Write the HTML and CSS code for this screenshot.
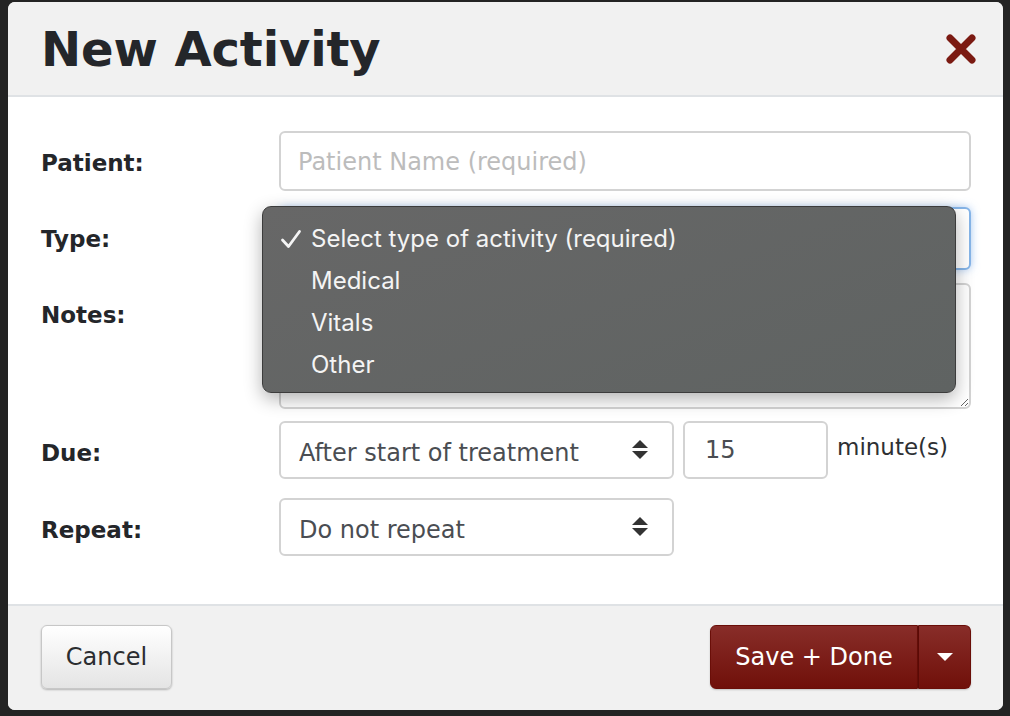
FILE: index.html
```html
<!DOCTYPE html>
<html lang="en">
<head>
	<meta charset="UTF-8">
	<title>New Activity</title>
	<link rel="stylesheet" href="styles.css">
</head>
<body>
	<div class="modal">
		<div class="modal-header">
			<h1>New Activity</h1>
			<button class="close-btn" aria-label="Close">
				<svg width="34" height="34" viewBox="0 0 34 34">
					<path d="M6 6 L28 28 M28 6 L6 28" stroke="#7b1a12" stroke-width="7" stroke-linecap="round"/>
				</svg>
			</button>
		</div>

		<div class="modal-body">
			<div class="form-row row-patient">
				<label class="form-label">Patient:</label>
				<input type="text" class="field" placeholder="Patient Name (required)">
			</div>

			<div class="form-row row-type">
				<label class="form-label">Type:</label>
				<!-- the open list below covers this select -->
				<div class="field select focused"></div>
			</div>

			<div class="form-row row-notes">
				<label class="form-label">Notes:</label>
				<textarea class="field notes"></textarea>
			</div>

			<div class="form-row row-due">
				<label class="form-label">Due:</label>
				<div class="due-group">
					<div class="field select half">
						<span class="select-text">After start of treatment</span>
						<svg class="arrows" width="16" height="20" viewBox="0 0 16 20"><path d="M0 8 L8 0 L16 8 Z M0 11 L16 11 L8 19 Z" fill="#333"/></svg>
					</div>
					<input type="text" class="field minutes" value="15">
					<span class="unit">minute(s)</span>
				</div>
			</div>

			<div class="form-row row-repeat">
				<label class="form-label">Repeat:</label>
				<div class="field select half">
					<span class="select-text">Do not repeat</span>
					<svg class="arrows" width="16" height="20" viewBox="0 0 16 20"><path d="M0 8 L8 0 L16 8 Z M0 11 L16 11 L8 19 Z" fill="#333"/></svg>
				</div>
			</div>
		</div>

		<div class="modal-footer">
			<button class="btn btn-cancel">Cancel</button>
			<div class="btn-group">
				<button class="btn btn-save">Save + Done</button>
				<button class="btn btn-save btn-caret">
					<svg width="16" height="9" viewBox="0 0 16 9"><path d="M0 0 L16 0 L8 8 Z" fill="#fff"/></svg>
				</button>
			</div>
		</div>

		<ul class="dropdown">
			<li class="selected">
				<svg class="check" width="22" height="20" viewBox="0 0 22 20"><path d="M2.5 11 L8.5 17.5 L19.5 2.5" fill="none" stroke="#f4f4f4" stroke-width="2.8" stroke-linecap="round" stroke-linejoin="round"/></svg>
				Select type of activity (required)
			</li>
			<li>Medical</li>
			<li>Vitals</li>
			<li>Other</li>
		</ul>
	</div>
</body>
</html>
```

FILE: styles.css
```css
body {
	margin: 0;
	background-color: #232323;
	font-family: 'DejaVu Sans', Verdana, sans-serif;
	color: #24262a;
	width: 1010px;
	height: 716px;
	overflow: hidden;
}

.modal {
	position: relative;
	margin: 2px 7px 0 8px;
	width: 995px;
	height: 708px;
	background-color: #fff;
	border-radius: 7px;
	overflow: hidden;
	display: flex;
	flex-direction: column;
}

.modal-header {
	box-sizing: border-box;
	height: 95px;
	flex-shrink: 0;
	background-color: #f1f1f1;
	border-bottom: 2px solid #dfe2e5;
	display: flex;
	align-items: center;
	justify-content: space-between;
	padding: 0 25px 0 33px;
}

.modal-header h1 {
	margin: 0;
	font-size: 48px;
	font-weight: bold;
	color: #24262a;
	letter-spacing: -0.1px;
}

.close-btn {
	background: none;
	border: none;
	padding: 0;
	width: 34px;
	height: 34px;
	cursor: pointer;
}

.modal-body {
	flex: 1;
	padding: 34px 32px 0 33px;
}

.form-row {
	display: grid;
	grid-template-columns: 238px 1fr;
	align-items: start;
}

.form-label {
	font-size: 23px;
	font-weight: bold;
	line-height: 56px;
	padding-top: 4px;
	color: #24262a;
}

.field {
	box-sizing: border-box;
	width: 100%;
	border: 2px solid #d3d3d3;
	border-radius: 6px;
	background-color: #fff;
	font-family: 'DejaVu Sans', Verdana, sans-serif;
	font-size: 24px;
	color: #4a4d52;
	padding: 0 17px;
	outline: none;
}

.field::placeholder {
	color: #bcbcbc;
}

.row-patient {
	margin-bottom: 16px;
}

.row-patient .field {
	height: 60px;
	padding-top: 2px;
}

.row-type {
	margin-bottom: 13px;
}

.select {
	display: flex;
	align-items: center;
	justify-content: space-between;
	height: 58px;
	padding-left: 18px;
	padding-right: 24px;
}

.select-text {
	padding-top: 5px;
}

.focused {
	height: 63px;
	border-color: #86b5e8;
	box-shadow: 0 0 8px rgba(102, 160, 233, 0.55);
}

.row-notes {
	margin-bottom: 12px;
}

.notes {
	height: 126px;
	resize: vertical;
}

.row-due {
	margin-bottom: 17px;
}

.due-group {
	display: flex;
	align-items: flex-start;
}

.half {
	width: 395px;
}

.minutes {
	width: 145px;
	height: 58px;
	margin-left: 9px;
	padding-left: 20px;
}

.unit {
	margin-left: 9px;
	font-size: 23px;
	line-height: 52px;
	color: #2e3033;
}

.arrows {
	display: block;
}

.modal-footer {
	box-sizing: border-box;
	height: 106px;
	flex-shrink: 0;
	background-color: #f1f1f1;
	border-top: 2px solid #dfe2e5;
	display: flex;
	justify-content: space-between;
	align-items: flex-start;
	padding: 19px 32px 0 33px;
}

.btn {
	height: 64px;
	font-family: 'DejaVu Sans', Verdana, sans-serif;
	font-size: 24px;
	border-radius: 6px;
	cursor: pointer;
}

.btn-cancel {
	width: 131px;
	color: #2b2d30;
	background: linear-gradient(#ffffff, #e4e4e4);
	border: 1px solid #c7c7c7;
	box-shadow: 0 1px 2px rgba(0, 0, 0, 0.25);
}

.btn-group {
	display: flex;
}

.btn-save {
	width: 208px;
	color: #fff;
	background: linear-gradient(#882d29, #70100a);
	border: 1px solid #6a0e08;
	border-radius: 6px 0 0 6px;
	box-shadow: 0 1px 2px rgba(0, 0, 0, 0.2);
}

.btn-caret {
	width: 53px;
	border-left: 1px solid #5a0a06;
	border-radius: 0 6px 6px 0;
	display: flex;
	align-items: center;
	justify-content: center;
	padding: 0;
}

.dropdown {
	position: absolute;
	left: 254px;
	top: 204px;
	width: 694px;
	height: 187px;
	box-sizing: border-box;
	margin: 0;
	padding: 11px 0 0 0;
	list-style: none;
	background: linear-gradient(160deg, #676767, #5f6362);
	border: 1px solid #3c3c3c;
	border-radius: 9px;
	box-shadow: 0 6px 18px rgba(0, 0, 0, 0.3);
	font-family: 'Inter', 'Roboto', sans-serif;
	font-size: 24px;
	color: #f4f4f4;
}

.dropdown li {
	height: 42px;
	line-height: 42px;
	padding-left: 48px;
	position: relative;
}

.dropdown .check {
	position: absolute;
	left: 17px;
	top: 11px;
}
```
